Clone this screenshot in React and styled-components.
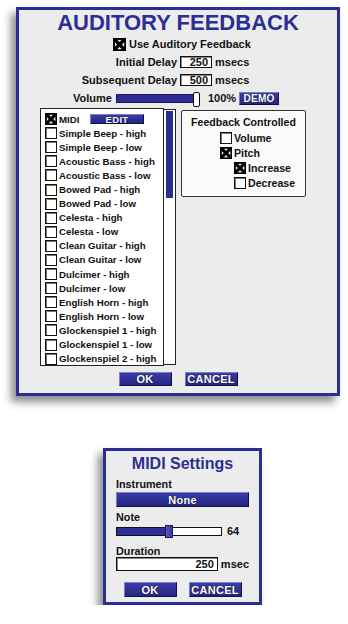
import React from 'react';
import styled, { createGlobalStyle, css } from 'styled-components';

const BLUE = '#2d2e94';

const GlobalStyle = createGlobalStyle`
  html, body { margin: 0; padding: 0; background: #fff; }
  body { font-family: "Liberation Sans", Arial, sans-serif; color: #111; }
`;

const Page = styled.div`
  display: flex;
  flex-direction: column;
  align-items: flex-start;
  padding-top: 7px;
`;

// Dialog frame
const Panel = styled.div`
  box-sizing: border-box;
  width: ${p => p.$w}px;
  height: ${p => p.$h}px;
  margin-left: ${p => p.$left}px;
  margin-top: ${p => p.$top || 0}px;
  border: 3px solid ${BLUE};
  background: #ececec;
  box-shadow: -5px 6px 8px rgba(0, 0, 0, 0.45);
  display: flex;
  flex-direction: column;
`;

const Title = styled.h1`
  margin: 0;
  text-align: center;
  font-size: ${p => p.$size}px;
  line-height: ${p => p.$lh}px;
  font-weight: 700;
  color: ${BLUE};
`;

const Row = styled.div`
  display: flex;
  align-items: center;
  height: 18px;
  padding-left: ${p => p.$pad || 0}px;
  gap: 3px;
  font-size: 11px;
  font-weight: 700;
`;

const Label = styled.span`
  width: ${p => p.$w}px;
  text-align: right;
  font-size: 11px;
  font-weight: 700;
  white-space: nowrap;
`;

const bevel = css`
  background: linear-gradient(#3b3ca6, #25267f);
  color: #fff;
  font-weight: 700;
  border: 1px solid;
  border-color: #7a7bd0 #101048 #101048 #7a7bd0;
  box-sizing: border-box;
  display: flex;
  align-items: center;
  justify-content: center;
  text-shadow: 0 0 1px #000;
  letter-spacing: 0.3px;
`;

const Button = styled.div`
  ${bevel};
  width: ${p => p.$w}px;
  height: ${p => p.$h}px;
  font-size: ${p => p.$fs || 11}px;
`;

const NumBox = styled.div`
  box-sizing: border-box;
  width: ${p => p.$w}px;
  height: ${p => p.$h || 12}px;
  background: #fff;
  border: 1px solid #111;
  box-shadow: inset 1px 1px 0 #888;
  text-align: right;
  padding-right: 3px;
  font-size: 11px;
  font-weight: 700;
  line-height: ${p => (p.$h || 12) - 2}px;
`;

const VolTrack = styled.div`
  position: relative;
  box-sizing: border-box;
  width: 82px;
  height: 9px;
  background: ${BLUE};
  border: 1px solid #1a1a5c;
  margin-right: 7px;
`;

const VolThumb = styled.div`
  position: absolute;
  right: -3px;
  top: -3px;
  width: 5px;
  height: 13px;
  background: #fff;
  border: 1px solid #111;
  border-radius: 2px;
`;

const Body = styled.div`
  display: flex;
  align-items: flex-start;
  padding-left: 21px;
  gap: 5px;
  margin-top: 1px;
`;

const ListFrame = styled.div`
  display: flex;
  height: 258px;
`;

const List = styled.div`
  box-sizing: border-box;
  width: 124px;
  height: 258px;
  background: #fff;
  border: 1px solid #222;
  padding: 3px 0 0 4px;
  overflow: hidden;
`;

const ListRow = styled.div`
  display: flex;
  align-items: center;
  height: 14.1px;
  gap: 2px;
  font-size: 9.7px;
  font-weight: 700;
  white-space: nowrap;
`;

const Scroll = styled.div`
  box-sizing: border-box;
  width: 12px;
  height: 256px;
  margin-top: 1px;
  background: #fff;
  border: 1px solid #222;
  border-left: none;
  padding: 1px 2px;
`;

const ScrollThumb = styled.div`
  height: 87px;
  background: ${BLUE};
`;

const FeedbackBox = styled.div`
  box-sizing: border-box;
  width: 125px;
  height: 87px;
  margin-top: 2px;
  background: #fafafa;
  border: 1px solid #333;
  border-radius: 2px;
  padding-top: 5px;
`;

const BoxTitle = styled.div`
  text-align: center;
  font-size: 10.6px;
  font-weight: 700;
  line-height: 13px;
  margin-bottom: 1px;
`;

const OptRow = styled.div`
  display: flex;
  align-items: center;
  gap: 2px;
  height: 15px;
  padding-left: ${p => p.$pad}px;
  font-size: 10.6px;
  font-weight: 700;
`;

const Footer = styled.div`
  display: flex;
  justify-content: center;
  gap: ${p => p.$gap}px;
  margin-top: ${p => p.$top}px;
`;

const BoxWrap = styled.span`
  display: inline-flex;
  flex: none;
`;

const CheckBox = ({ checked, size = 12 }) => (
  <BoxWrap>
    <svg width={size} height={size} viewBox="0 0 12 12">
      <rect x="0.5" y="0.5" width="11" height="11" fill="#fff" stroke="#111" />
      <path d="M1 1.5 H11 M1.5 1 V11" stroke="#777" strokeWidth="1" />
      {checked && (
        <>
          <rect x="0.75" y="0.75" width="10.5" height="10.5" fill="none" stroke="#000" strokeWidth="1.8" />
          <path d="M1.6 1.6 L10.4 10.4 M10.4 1.6 L1.6 10.4" stroke="#000" strokeWidth="3.2" />
        </>
      )}
    </svg>
  </BoxWrap>
);

// MIDI settings panel
const MidiBody = styled.div`
  display: flex;
  flex-direction: column;
  padding: 0 10px;
`;

const FieldLabel = styled.div`
  font-size: 10.8px;
  font-weight: 700;
  line-height: 12px;
  margin-top: ${p => p.$top}px;
`;

const FieldRow = styled.div`
  display: flex;
  align-items: center;
  gap: 3px;
  margin-top: ${p => p.$top || 0}px;
  font-size: 11px;
  font-weight: 700;
`;

const NoteTrack = styled.div`
  position: relative;
  box-sizing: border-box;
  width: 106px;
  height: 9px;
  background: linear-gradient(to right, ${BLUE} 50%, #fff 50%);
  border: 1px solid #111;
  margin-right: 2px;
`;

const NoteThumb = styled.div`
  position: absolute;
  left: 48px;
  top: -3px;
  width: 8px;
  height: 13px;
  background: linear-gradient(to right, #5557b8, #3a3ca0);
  border: 1px solid #1a1a5c;
  box-sizing: border-box;
`;

const instruments = [
  'Simple Beep - high', 'Simple Beep - low', 'Acoustic Bass - high', 'Acoustic Bass - low',
  'Bowed Pad - high', 'Bowed Pad - low', 'Celesta - high', 'Celesta - low',
  'Clean Guitar - high', 'Clean Guitar - low', 'Dulcimer - high', 'Dulcimer - low',
  'English Horn - high', 'English Horn - low', 'Glockenspiel 1 - high', 'Glockenspiel 1 - low',
  'Glockenspiel 2 - high',
];

export default function App() {
  return (
    <Page>
      <GlobalStyle />
      <Panel $w={324} $h={389} $left={16}>
        <Title $size={22} $lh={25}>AUDITORY FEEDBACK</Title>
        <Row $pad={94}>
          <CheckBox checked size={13} />
          <span>Use Auditory Feedback</span>
        </Row>
        <Row>
          <Label $w={158}>Initial Delay</Label>
          <NumBox $w={32}>250</NumBox>
          <span>msecs</span>
        </Row>
        <Row>
          <Label $w={158}>Subsequent Delay</Label>
          <NumBox $w={32}>500</NumBox>
          <span>msecs</span>
        </Row>
        <Row $pad={54}>
          <span style={{ marginRight: 1 }}>Volume</span>
          <VolTrack><VolThumb /></VolTrack>
          <span>100%</span>
          <Button $w={40} $h={13} $fs={10}>DEMO</Button>
        </Row>
        <Body>
          <ListFrame>
            <List>
              <ListRow>
                <CheckBox checked />
                <span style={{ width: 29 }}>MIDI</span>
                <Button $w={54} $h={10} $fs={9.5}>EDIT</Button>
              </ListRow>
              {instruments.map(name => (
                <ListRow key={name}>
                  <CheckBox />
                  <span>{name}</span>
                </ListRow>
              ))}
            </List>
            <Scroll><ScrollThumb /></Scroll>
          </ListFrame>
          <FeedbackBox>
            <BoxTitle>Feedback Controlled</BoxTitle>
            <OptRow $pad={38}><CheckBox /><span>Volume</span></OptRow>
            <OptRow $pad={38}><CheckBox checked /><span>Pitch</span></OptRow>
            <OptRow $pad={52}><CheckBox checked /><span>Increase</span></OptRow>
            <OptRow $pad={52}><CheckBox /><span>Decrease</span></OptRow>
          </FeedbackBox>
        </Body>
        <Footer $gap={13} $top={6}>
          <Button $w={53} $h={14}>OK</Button>
          <Button $w={53} $h={14}>CANCEL</Button>
        </Footer>
      </Panel>

      <Panel $w={159} $h={157} $left={103} $top={52}>
        <Title $size={16} $lh={26}>MIDI Settings</Title>
        <MidiBody>
          <FieldLabel $top={1}>Instrument</FieldLabel>
          <Button $w={133} $h={15} style={{ marginTop: 2 }}>None</Button>
          <FieldLabel $top={4}>Note</FieldLabel>
          <FieldRow $top={2}>
            <NoteTrack><NoteThumb /></NoteTrack>
            <span>64</span>
          </FieldRow>
          <FieldLabel $top={8}>Duration</FieldLabel>
          <FieldRow>
            <NumBox $w={109} $h={14}>250</NumBox>
            <span>msec</span>
          </FieldRow>
          <Footer $gap={12} $top={11}>
            <Button $w={53} $h={15}>OK</Button>
            <Button $w={53} $h={15}>CANCEL</Button>
          </Footer>
        </MidiBody>
      </Panel>
    </Page>
  );
}
